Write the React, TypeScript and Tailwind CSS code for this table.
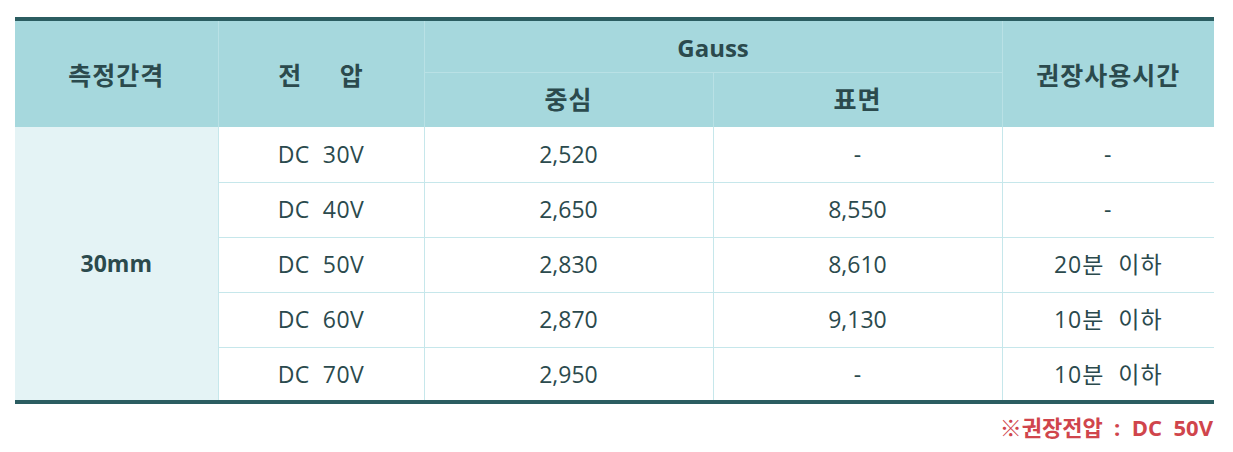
// magnet gauss measurement table
const rows = [
  { volt: 'DC  30V', center: '2,520', surface: '-', time: '-' },
  { volt: 'DC  40V', center: '2,650', surface: '8,550', time: '-' },
  { volt: 'DC  50V', center: '2,830', surface: '8,610', time: '20분  이하' },
  { volt: 'DC  60V', center: '2,870', surface: '9,130', time: '10분  이하' },
  { volt: 'DC  70V', center: '2,950', surface: '-', time: '10분  이하' },
];

const font = { fontFamily: '"Open Sans", "Noto Sans CJK KR", sans-serif' };

export default function App() {
  return (
    <div className="w-[1233px] h-[452px] bg-white pt-[17px] pl-[15px]" style={font}>
      <div className="w-[1199px]">
        <table className="w-full border-collapse table-fixed text-[#2b4a4d]">
          <colgroup>
            <col className="w-[203px]" />
            <col className="w-[206px]" />
            <col className="w-[289px]" />
            <col className="w-[289px]" />
            <col />
          </colgroup>
          <thead className="border-t-4 border-[#2b5d61]">
            <tr className="h-[53px] bg-[#a6d8dd] text-[25px] font-bold tracking-[1px]">
              <th rowSpan={2} className="border-r border-[#b9e1e5] pt-1">측정간격</th>
              <th rowSpan={2} className="border-r border-[#b9e1e5] whitespace-pre pt-1">전     압</th>
              <th colSpan={2} className="border-r border-b border-[#b9e1e5] pt-1 tracking-normal text-[24px]">Gauss</th>
              <th rowSpan={2} className="pt-1">권장사용시간</th>
            </tr>
            <tr className="h-[55px] bg-[#a6d8dd] text-[25px] font-bold tracking-[1px]">
              <th className="border-r border-[#b9e1e5]">중심</th>
              <th className="border-r border-[#b9e1e5]">표면</th>
            </tr>
          </thead>
          <tbody className="border-b-4 border-[#2b5d61] text-[23px]">
            {rows.map((r, i) => (
              <tr key={r.volt} className="h-[55px]">
                {i === 0 && (
                  <td rowSpan={5} className="bg-[#e4f3f5] text-center font-bold border-r border-[#c6e7eb]">
                    30mm
                  </td>
                )}
                <td className="text-center whitespace-pre border-r border-b border-[#c6e7eb] tracking-[0.5px]">{r.volt}</td>
                <td className="text-center border-r border-b border-[#c6e7eb]">{r.center}</td>
                <td className="text-center border-r border-b border-[#c6e7eb]">{r.surface}</td>
                <td className="text-center whitespace-pre border-b border-[#c6e7eb] tracking-[1px]">{r.time}</td>
              </tr>
            ))}
          </tbody>
        </table>
        <div className="flex justify-end pr-[1px] pt-[7px] text-[22px] font-bold text-[#d0454c] whitespace-pre">
          ※권장전압  :  DC  50V
        </div>
      </div>
    </div>
  );
}
